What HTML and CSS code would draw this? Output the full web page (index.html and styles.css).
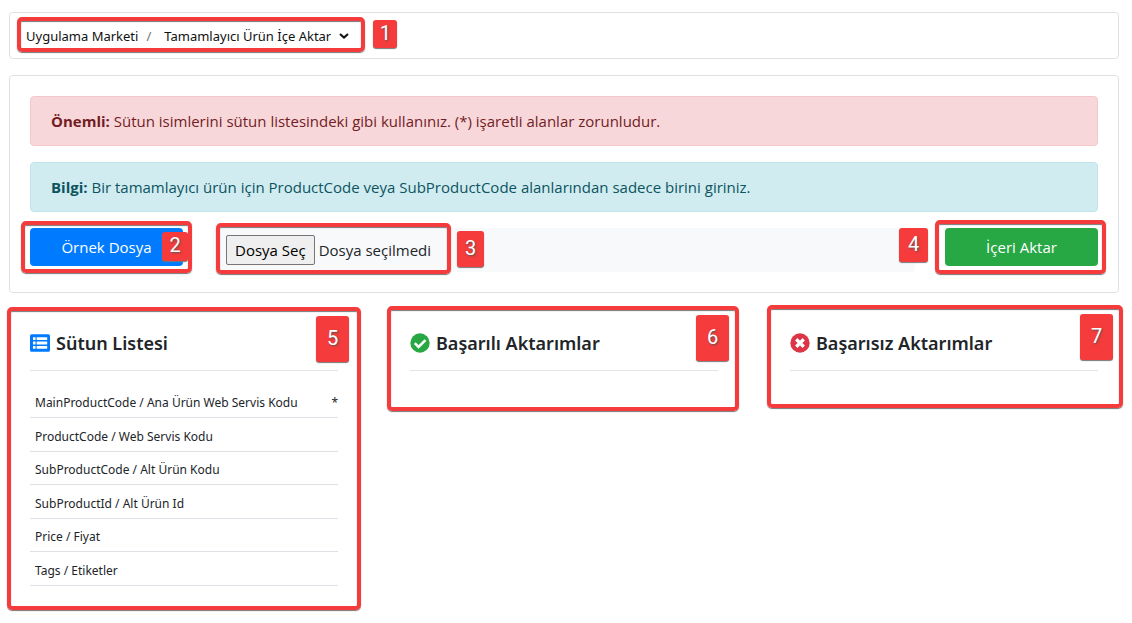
FILE: index.html
```html
<!DOCTYPE html>
<html lang="tr">
<head>
<meta charset="utf-8">
<meta name="viewport" content="width=device-width, initial-scale=1">
<title>Tamamlayıcı Ürün İçe Aktar</title>
<link rel="stylesheet" href="styles.css">
</head>
<body>
<div class="page">
  <header class="card topbar">
    <nav class="breadcrumb" aria-label="Konum">
      <a class="crumb" href="#">Uygulama Marketi</a>
      <span class="slash">/</span>
      <span class="picker">
        <select class="picker-select" aria-label="Uygulama">
          <option>Tamamlayıcı Ürün İçe Aktar</option>
        </select>
        <svg class="chevron" viewBox="0 0 10 6" aria-hidden="true"><path d="M1 1l4 3.6L9 1" fill="none" stroke="#111" stroke-width="2"/></svg>
      </span>
      <span class="frame frame-nav"></span>
      <span class="mark mark-1">1</span>
    </nav>
  </header>

  <main>
    <section class="card panel">
      <p class="alert alert-danger"><strong>Önemli:</strong> Sütun isimlerini sütun listesindeki gibi kullanınız. (*) işaretli alanlar zorunludur.</p>
      <p class="alert alert-info"><strong>Bilgi:</strong> Bir tamamlayıcı ürün için ProductCode veya SubProductCode alanlarından sadece birini giriniz.</p>
      <div class="actions">
        <div class="action">
          <button class="btn btn-primary" type="button">Örnek Dosya</button>
          <span class="frame frame-sample"></span>
          <span class="mark mark-2">2</span>
        </div>
        <div class="action action-file">
          <label class="file">
            <input class="file-input" type="file">
            <span class="file-btn">Dosya Seç</span>
            <span class="file-name">Dosya seçilmedi</span>
          </label>
          <span class="frame frame-file"></span>
          <span class="mark mark-3">3</span>
        </div>
        <div class="action">
          <button class="btn btn-success" type="button">İçeri Aktar</button>
          <span class="frame frame-import"></span>
          <span class="mark mark-4">4</span>
        </div>
      </div>
    </section>

    <div class="columns">
      <section class="column">
        <h2 class="title">
          <svg class="icon" viewBox="0 0 512 512" aria-hidden="true"><rect y="32" width="512" height="448" rx="40" fill="#007bff"/><path fill="#fff" d="M76 110h66v72H76zM170 110h270v72H170zM76 220h66v72H76zM170 220h270v72H170zM76 330h66v72H76zM170 330h270v72H170z"/></svg>
          Sütun Listesi
        </h2>
        <table class="fields">
          <tbody>
            <tr><td>MainProductCode / Ana Ürün Web Servis Kodu</td><td class="required">*</td></tr>
            <tr><td>ProductCode / Web Servis Kodu</td><td></td></tr>
            <tr><td>SubProductCode / Alt Ürün Kodu</td><td></td></tr>
            <tr><td>SubProductId / Alt Ürün Id</td><td></td></tr>
            <tr><td>Price / Fiyat</td><td></td></tr>
            <tr><td>Tags / Etiketler</td><td></td></tr>
          </tbody>
        </table>
        <span class="frame frame-list"></span>
        <span class="mark mark-5">5</span>
      </section>
      <section class="column">
        <h2 class="title">
          <svg class="icon" viewBox="0 0 512 512" aria-hidden="true"><circle cx="256" cy="256" r="248" fill="#28a745"/><path d="M122 262l96 96 178-178" fill="none" stroke="#fff" stroke-width="64"/></svg>
          Başarılı Aktarımlar
        </h2>
        <span class="frame frame-ok"></span>
        <span class="mark mark-6">6</span>
      </section>
      <section class="column">
        <h2 class="title">
          <svg class="icon" viewBox="0 0 512 512" aria-hidden="true"><circle cx="256" cy="256" r="248" fill="#dc3545"/><path d="M160 160l192 192M352 160L160 352" fill="none" stroke="#fff" stroke-width="84"/></svg>
          Başarısız Aktarımlar
        </h2>
        <span class="frame frame-fail"></span>
        <span class="mark mark-7">7</span>
      </section>
    </div>
  </main>
</div>
</body>
</html>
```

FILE: styles.css
```css
* { box-sizing: border-box; }

body {
  margin: 0;
  background: #fff;
  color: #212529;
  font: 15px/24px "Open Sans", "Noto Sans", sans-serif;
}

.page { padding: 12px 13px 12px 9px; }

.card {
  border: 1px solid #dee2e6;
  border-radius: 4px;
  background: #fff;
}

/* Top bar */
.topbar { display: flex; padding: 12px 16px; }

.breadcrumb {
  position: relative;
  display: flex;
  align-items: center;
  gap: 8px;
  height: 21px;
  font-family: "Noto Sans", sans-serif;
  font-size: 13px;
  color: #111;
}

.crumb { color: inherit; text-decoration: none; }
.slash { color: #6c757d; }

.picker { display: flex; align-items: center; gap: 8px; padding-left: 5px; }

.picker-select {
  appearance: none;
  border: 0;
  padding: 0;
  background: none;
  color: inherit;
  font: inherit;
}

.chevron { width: 10px; height: 6px; }

/* Import panel */
.panel { margin-top: 16px; padding: 20px; }

.alert {
  margin: 0 0 16px;
  padding: 12px 20px;
  border: 1px solid;
  border-radius: 4px;
}

.alert-danger { color: #721c24; background: #f8d7da; border-color: #f5c6cb; }
.alert-info { color: #0c5460; background: #d1ecf1; border-color: #bee5eb; }

.actions {
  display: grid;
  grid-template-columns: repeat(6, 1fr);
  gap: 30px;
}

.action { position: relative; }
.action-file { grid-column: span 4; }

.btn {
  width: 100%;
  padding: 7px 12px;
  border: 0;
  border-radius: 4px;
  color: #fff;
  font: inherit;
}

.btn-primary { background: #007bff; }
.btn-success { background: #28a745; }

.file {
  display: flex;
  align-items: center;
  gap: 4px;
  padding: 7px 13px;
  border-radius: 4px;
  background: #f8f9fa;
}

.file-input { position: absolute; width: 1px; height: 1px; opacity: 0; }

.file-btn {
  padding: 2px 8px;
  border: 1px solid #767676;
  border-radius: 2px;
  background: #efefef;
  color: #000;
}

/* Result columns */
.columns {
  display: grid;
  grid-template-columns: repeat(3, 1fr);
  align-items: start;
  gap: 30px;
  margin-top: 16px;
}

.column { position: relative; min-height: 96px; padding: 21px; }

.title {
  display: flex;
  align-items: center;
  gap: 6px;
  margin: 0;
  padding: 1px 0 15px;
  border-bottom: 1px solid #e3e4e5;
  font-family: "Noto Sans", sans-serif;
  font-size: 18px;
  line-height: 24px;
  font-weight: 600;
}

.icon { width: 20px; height: 20px; }

.fields {
  width: 100%;
  height: 201px;
  margin-top: 14px;
  border-collapse: collapse;
  font-family: "Noto Sans", sans-serif;
  font-size: 12px;
  line-height: 19px;
}

.fields td { padding: 8px 0 5px 5px; border-bottom: 1px solid #dee2e6; }
.fields .required { text-align: right; }

/* Numbered highlights */
.frame {
  position: absolute;
  border: 4px solid #f53b3b;
  border-radius: 5px;
  box-shadow: 0 1px 1px #777, inset 0 1px 1px #777;
  pointer-events: none;
}

.frame-nav { inset: -8px -16px -6px -9px; }
.frame-sample { inset: -7px -9px -1px; }
.frame-file { inset: -5px auto -2px 3px; width: 235px; }
.frame-import { inset: -8px -8px -2px -10px; }
.frame-list { inset: -2px -2px -3px; }
.frame-ok { inset: -3px 0 -6px -2px; }
.frame-fail { inset: -4px -4px -3px -2px; }

.mark {
  position: absolute;
  display: flex;
  justify-content: center;
  align-items: center;
  padding-bottom: 3px;
  border-radius: 3px;
  background: #f53b3b;
  box-shadow: 0 1px 1px #777;
  color: #fff;
  font: 20px/24px Roboto, sans-serif;
  text-shadow: 1px 1px 2px #555;
}

.mark-1 { top: -5px; right: -48px; width: 24px; height: 28px; }
.mark-2 { top: 4px; right: -5px; width: 26px; height: 29px; }
.mark-3 { top: 3px; left: 244px; width: 27px; height: 36px; }
.mark-4 { top: 0; left: -46px; width: 29px; height: 34px; }
.mark-5,
.mark-6,
.mark-7 { right: 10px; width: 33px; height: 46px; }
.mark-5 { top: 7px; }
.mark-6 { top: 6px; }
.mark-7 { top: 5px; right: 6px; }
```
